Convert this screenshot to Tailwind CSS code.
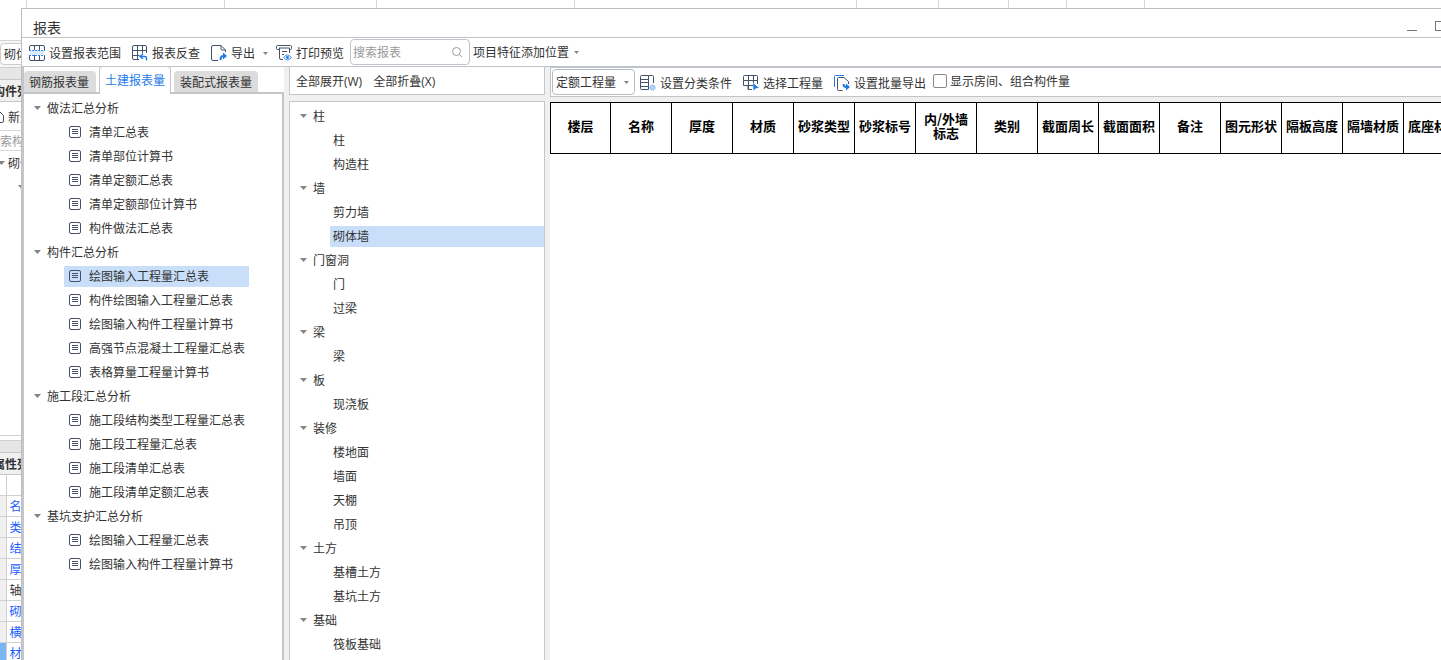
<!DOCTYPE html>
<html lang="zh-CN">
<head>
<meta charset="utf-8">
<title>报表</title>
<script src="https://cdn.jsdelivr.net/npm/@tailwindcss/browser@4"></script>
</head>
<body class="flex h-screen flex-col overflow-hidden bg-white font-['Noto_Sans_CJK_SC',sans-serif] text-xs text-[#333]">

<svg class="hidden">
  <symbol id="doc" viewBox="0 0 12 12"><rect x=".5" y=".5" width="11" height="11" rx="1.5" fill="none" stroke="#47506a"/><path d="M3 3.5h6M3 5.5h6M3 7.5h6" stroke="#47506a" fill="none"/></symbol>
  <symbol id="range" viewBox="0 0 16 16"><path d="M1 5h14v5H1z" fill="#dcebfb"/><path d="M.5 5V2A1.500 1.500 0 0 1 2 .5h12A1.500 1.500 0 0 1 15.500 2v3M.5 10v4A1.500 1.500 0 0 0 2 15.500h12a1.500 1.500 0 0 0 1.500-1.500v-4M5.500 1v4M10.500 1v4M5.500 10v5M10.500 10v5" fill="none" stroke="#47506a"/><path d="M0 5.500h16M0 10.500h16" stroke="#2d87f0" stroke-dasharray="2 1"/></symbol>
  <symbol id="lookup" viewBox="0 0 16 16"><path d="M7 14.500H2A1.500 1.500 0 0 1 .5 13V2A1.500 1.500 0 0 1 2 .5h11A1.500 1.500 0 0 1 14.500 2v6M.5 5.500h14M.5 10.500h7M5.500 .5v14M10.500 .5v8" fill="none" stroke="#47506a"/><path d="M11 9l-3 2.500 3 2.500M8.500 11.500H13a1.500 1.500 0 0 1 1.500 1.500v2.500" fill="none" stroke="#1e7be8" stroke-width="1.400"/></symbol>
  <symbol id="export" viewBox="0 0 16 16"><path d="M7 15.500H2A1.500 1.500 0 0 1 .5 14V2A1.500 1.500 0 0 1 2 .5h8l4.500 4.500v2M10 .5V4a1 1 0 0 0 1 1h3.500" fill="none" stroke="#47506a"/><path d="M9.500 15c0-3 1-4 3-4" fill="none" stroke="#1e7be8" stroke-width="2"/><path d="M12 7.500l4 3.500-4 3.500z" fill="#1e7be8"/></symbol>
  <symbol id="preview" viewBox="0 0 16 16"><path d="M3 4.500H1.500A1 1 0 0 1 .5 3.500v-2a1 1 0 0 1 1-1h13a1 1 0 0 1 1 1v2a1 1 0 0 1-1 1H13M3.500 3v10a1.500 1.500 0 0 0 1.500 1.500h2M3 3h10.500v5M6 6.500h5M6 9.500h2" fill="none" stroke="#47506a"/><path d="M7.500 12.500q4-5 8 0q-4 5-8 0z" fill="#dcebfb" stroke="#4a94f0"/><circle cx="11.500" cy="12.500" r="1.400" fill="#1e7be8"/></symbol>
  <symbol id="classify" viewBox="0 0 16 16"><path d="M8.500 14.500H1.500a1 1 0 0 1-1-1v-12a1 1 0 0 1 1-1h7v14M.5 4.500h8M.5 7.500h8M.5 11.500h8M8.500 .5h4a1 1 0 0 1 1 1V8" fill="none" stroke="#47506a"/><circle cx="12.500" cy="12.500" r="2.500" fill="#b5d5fa" stroke="#5d9fef" stroke-dasharray="1.500 .7"/></symbol>
  <symbol id="pick" viewBox="0 0 16 16"><path d="M9 14.500H5.500V.5h8a1 1 0 0 1 1 1V9M.5 5.500v-4a1 1 0 0 1 1-1H6M.5 5.500h14M5 14.500v-4H.5v-5M5.500 10.500H10M10.500 .5V8" fill="none" stroke="#47506a"/><path d="M10 8l6 5-3 .2-2.500 2.300z" fill="#1e7be8"/></symbol>
  <symbol id="batch" viewBox="0 0 16 16"><path d="M.5 12V1.500a1 1 0 0 1 1-1H10" fill="none" stroke="#1e7be8"/><path d="M8.500 15.500h-4a1 1 0 0 1-1-1v-11a1 1 0 0 1 1-1H10l4.500 4V9" fill="none" stroke="#47506a"/><path d="M9.500 9q0 3 3 3" fill="none" stroke="#1e7be8" stroke-width="2"/><path d="M12 8.500l4 3.500-4 3.500z" fill="#1e7be8"/></symbol>
  <symbol id="down" viewBox="0 0 7 4"><path d="M0 0h7L3.500 4z" fill="#858585"/></symbol>
</svg>

<!-- top edge of the main window's grid -->
<div class="flex h-2 shrink-0">
  <i class="w-[27px] border-r border-[#d4d4d4]"></i><i class="w-[198px] border-r border-[#d4d4d4]"></i><i class="w-[152px] border-r border-[#d4d4d4]"></i><i class="w-[198px] border-r border-[#d4d4d4]"></i><i class="w-[282px] border-r border-[#d4d4d4]"></i><i class="w-[82px] border-r border-[#d4d4d4]"></i><i class="w-[70px] border-r border-[#d4d4d4]"></i><i class="w-[58px] border-r border-[#d4d4d4]"></i><i class="w-[78px] border-r border-[#d4d4d4]"></i>
</div>

<div class="flex min-h-0 flex-1">
  <!-- visible sliver of the main window -->
  <aside class="flex w-[21px] shrink-0 flex-col overflow-hidden whitespace-nowrap">
    <div class="h-8 shrink-0"></div>
    <div class="h-[27px] shrink-0 border-t border-[#d4d4d4] bg-[#f5f5f5] pt-0.5"><div class="h-[22px] w-20 rounded border border-[#ccc] bg-white pl-[3px] leading-5">砌体墙</div></div>
    <div class="h-3 shrink-0 border-t border-[#d0d0d0] bg-[#e6e6e6]"></div>
    <div class="-ml-[3px] h-[23px] shrink-0 border-y border-[#c8c8c8] bg-[#f0f0f0] font-bold leading-[22px]"><span class="-ml-1">构件列表</span></div>
    <div class="flex h-7 shrink-0 items-center gap-1 pt-0.5"><svg class="-ml-2 h-3 w-3 shrink-0" viewBox="0 0 12 12"><path d="M2 .5h5.500l4 4V10a1.500 1.500 0 0 1-1.500 1.500H2" fill="none" stroke="#47506a"/></svg>新建</div>
    <div class="-ml-3 h-[21px] shrink-0 border-y border-[#d8d8d8] leading-[19px] text-[#999]">搜索构件</div>
    <div class="flex h-6 shrink-0 items-center gap-[3px]"><svg class="-ml-0.5 h-1 w-[7px] shrink-0"><use href="#down"/></svg>砌体墙</div>
    <div class="flex h-6 shrink-0 items-center pl-[18px]"><svg class="h-1 w-[7px] shrink-0"><use href="#down"/></svg></div>
    <div class="h-[236px] shrink-0"></div>
    <div class="h-[5px] shrink-0 border-t border-[#d0d0d0]"></div>
    <div class="h-3 shrink-0 border-t border-[#d0d0d0] bg-[#e6e6e6]"></div>
    <div class="-ml-[3px] h-[23px] shrink-0 border-y border-[#c8c8c8] bg-[#f0f0f0] font-bold leading-[22px]"><span class="-ml-1">属性列表</span></div>
    <table class="w-20 table-fixed border-collapse text-[#1a5cff]">
      <tbody>
      <tr class="h-5"><td class="w-1.5 border-r border-b border-[#d0d0d0]"></td><td class="border-b border-[#d0d0d0]"></td></tr>
      <tr class="h-[21px]"><td class="border-r border-b border-[#d0d0d0] bg-[#f0f0f0]"></td><td class="border-b border-[#d0d0d0] pl-[3px] leading-5">名称</td></tr>
      <tr class="h-[21px]"><td class="border-r border-b border-[#d0d0d0] bg-[#f0f0f0]"></td><td class="border-b border-[#d0d0d0] pl-[3px] leading-5">类别</td></tr>
      <tr class="h-[21px]"><td class="border-r border-b border-[#d0d0d0] bg-[#f0f0f0]"></td><td class="border-b border-[#d0d0d0] pl-[3px] leading-5">结构类型</td></tr>
      <tr class="h-[21px]"><td class="border-r border-b border-[#d0d0d0] bg-[#f0f0f0]"></td><td class="border-b border-[#d0d0d0] pl-[3px] leading-5">厚度</td></tr>
      <tr class="h-[21px]"><td class="border-r border-b border-[#d0d0d0] bg-[#f0f0f0]"></td><td class="border-b border-[#d0d0d0] pl-[3px] leading-5 text-[#333]">轴线</td></tr>
      <tr class="h-[21px]"><td class="border-r border-b border-[#d0d0d0] bg-[#f0f0f0]"></td><td class="border-b border-[#d0d0d0] pl-[3px] leading-5">砌体</td></tr>
      <tr class="h-[21px]"><td class="border-r border-b border-[#d0d0d0] bg-[#f0f0f0]"></td><td class="border-b border-[#d0d0d0] pl-[3px] leading-5">横向</td></tr>
      <tr class="h-[21px]"><td class="border-r border-b border-[#d0d0d0] bg-[#7ab5f5]"></td><td class="border-b border-[#d0d0d0] pl-[3px] leading-5">材质</td></tr>
      </tbody>
    </table>
  </aside>

  <!-- report dialog -->
  <main class="flex min-w-0 flex-1 flex-col border-t border-l border-[#bfbfbf] bg-white">
    <header class="flex h-7 shrink-0 items-end justify-between overflow-hidden pl-[11px]">
      <h1 class="text-sm leading-5">报表</h1>
      <div class="-mr-1 flex items-end gap-[18px] pb-1.5">
        <button aria-label="最小化" class="h-2.5 w-2.5 border-b border-[#777]"></button>
        <button aria-label="最大化" class="h-2.5 w-2.5 border border-[#777]"></button>
      </div>
    </header>

    <div class="flex h-[29px] shrink-0 items-center whitespace-nowrap border-t border-[#bfc3ca] pl-[7px]">
      <button class="flex items-center gap-1 pt-0.5"><svg class="h-4 w-4"><use href="#range"/></svg>设置报表范围</button>
      <button class="ml-[11px] flex items-center gap-1 pt-0.5"><svg class="h-4 w-4"><use href="#lookup"/></svg>报表反查</button>
      <button class="ml-[11px] flex items-center gap-1 pt-0.5"><svg class="h-4 w-4"><use href="#export"/></svg>导出<svg class="ml-1 h-[3px] w-[5px]" viewBox="0 0 7 4"><use href="#down" width="7" height="4"/></svg></button>
      <button class="ml-2 flex items-center gap-1 pt-0.5"><svg class="h-4 w-4"><use href="#preview"/></svg>打印预览</button>
      <label class="ml-1.5 flex h-[26px] w-[120px] items-center rounded border border-[#c0c4cc] pr-1.5 pl-0.5">
        <input type="text" aria-label="搜索报表" placeholder="搜索报表" class="w-full min-w-0 outline-none placeholder:text-[#999]">
        <svg class="h-3 w-3 shrink-0" viewBox="0 0 12 12" fill="none" stroke="#999"><circle cx="5.500" cy="5.500" r="4"/><path d="M8.500 8.500l2.500 2.500"/></svg>
      </label>
      <button class="ml-[3px] flex items-center gap-[5px]">项目特征添加位置<svg class="h-[3px] w-[5px]" viewBox="0 0 7 4"><use href="#down" width="7" height="4"/></svg></button>
    </div>

    <div class="flex min-h-0 flex-1 border-t border-[#bfc3ca] bg-[#f0f0f0]">
      <section class="flex w-[262px] shrink-0 flex-col border-l-2 border-[#c5c6cc]">
        <div role="tablist" class="flex h-[27px] shrink-0 items-end gap-[3px] whitespace-nowrap border-b-2 border-[#c5c6cc] bg-white">
          <button role="tab" class="h-[21px] w-[72px] rounded-t bg-[#dcdcdc] pr-0.5">钢筋报表量</button>
          <button role="tab" aria-selected="true" class="-mb-0.5 h-7 w-[72px] rounded-t border border-b-0 border-[#c5c6cc] bg-white pb-0.5 text-[#1e7be8]">土建报表量</button>
          <button role="tab" class="h-[21px] w-[84px] rounded-t bg-[#dcdcdc]">装配式报表量</button>
        </div>
        <ul id="reports" class="flex-1 overflow-hidden border-r-2 border-[#c5c6cc] bg-white pt-0.5"></ul>
      </section>

      <section class="ml-[5px] flex w-64 shrink-0 flex-col gap-1.5">
        <div class="flex h-7 shrink-0 items-center gap-[11px] border border-t-0 border-[#c5c6cc] bg-white px-1.5 pt-0.5 font-['Open_Sans','Noto_Sans_CJK_SC',sans-serif]"><button>全部展开(W)</button><button>全部折叠(X)</button></div>
        <ul id="parts" class="flex-1 overflow-hidden border border-b-0 border-[#c5c6cc] bg-white pt-0.5"></ul>
      </section>

      <section class="ml-[5px] flex min-w-0 flex-1 flex-col overflow-hidden">
        <div class="flex h-[30px] shrink-0 items-center whitespace-nowrap border-y border-l border-[#c0c4ca] bg-white pl-px">
          <div class="relative flex items-center">
            <select aria-label="工程量类型" class="h-[26px] w-[83px] appearance-none rounded border border-[#b8bcc4] bg-white pl-[3px]"><option>定额工程量</option></select>
            <svg class="pointer-events-none absolute right-1.5 h-[3px] w-[5px]" viewBox="0 0 7 4"><use href="#down" width="7" height="4"/></svg>
          </div>
          <button class="ml-[5px] flex items-center gap-1 pt-0.5"><svg class="h-4 w-4"><use href="#classify"/></svg>设置分类条件</button>
          <button class="ml-[11px] flex items-center gap-1 pt-0.5"><svg class="h-4 w-4"><use href="#pick"/></svg>选择工程量</button>
          <button class="ml-[11px] flex items-center gap-1 pt-0.5"><svg class="h-4 w-4"><use href="#batch"/></svg>设置批量导出</button>
          <label class="ml-[7px] flex items-center gap-[3px] pb-0.5"><input type="checkbox" class="h-3.5 w-3.5 appearance-none rounded-xs border border-[#888] bg-white">显示房间、组合构件量</label>
        </div>
        <div class="mt-[5px] flex-1 bg-white">
          <table class="w-[915px] table-fixed border-collapse text-[13px] leading-[14px] font-bold text-black">
            <thead><tr id="cols" class="h-[51px]"></tr></thead>
          </table>
        </div>
      </section>
    </div>
  </main>
</div>

<script>
const reports = [
  ['做法汇总分析', ['清单汇总表', '清单部位计算书', '清单定额汇总表', '清单定额部位计算书', '构件做法汇总表']],
  ['构件汇总分析', ['*绘图输入工程量汇总表', '构件绘图输入工程量汇总表', '绘图输入构件工程量计算书', '高强节点混凝土工程量汇总表', '表格算量工程量计算书']],
  ['施工段汇总分析', ['施工段结构类型工程量汇总表', '施工段工程量汇总表', '施工段清单汇总表', '施工段清单定额汇总表']],
  ['基坑支护汇总分析', ['绘图输入工程量汇总表', '绘图输入构件工程量计算书']]
];
const parts = [
  ['柱', ['柱', '构造柱']], ['墙', ['剪力墙', '*砌体墙']], ['门窗洞', ['门', '过梁']], ['梁', ['梁']], ['板', ['现浇板']],
  ['装修', ['楼地面', '墙面', '天棚', '吊顶']], ['土方', ['基槽土方', '基坑土方']], ['基础', ['筏板基础']]
];
const cols = ['楼层', '名称', '厚度', '材质', '砂浆类型', '砂浆标号', '内/外墙标志', '类别', '截面周长', '截面面积', '备注', '图元形状', '隔板高度', '隔墙材质', '底座材质'];
const group = t => `<button class="flex h-6 w-full items-center gap-1.5 pl-2.5"><svg class="h-1 w-[7px]"><use href="#down"/></svg>${t}</button>`;
document.getElementById('reports').innerHTML = reports.map(([g, items]) =>
  `<li>${group(g)}<ul>${items.map(t => {
    const on = t[0] === '*';
    return `<li class="flex h-6 items-center pl-10"><button class="flex h-[21px] w-[185px] items-center gap-2 pl-[5px] whitespace-nowrap ${on ? 'bg-[#c9dff9]' : ''}"><svg class="h-3 w-3 shrink-0"><use href="#doc"/></svg>${t.replace('*', '')}</button></li>`;
  }).join('')}</ul></li>`).join('');
document.getElementById('parts').innerHTML = parts.map(([g, items]) =>
  `<li>${group(g)}<ul>${items.map(t =>
    `<li class="flex h-6 items-center pl-10"><button class="h-[21px] w-full pl-[3px] text-left ${t[0] === '*' ? 'bg-[#c9dff9]' : ''}">${t.replace('*', '')}</button></li>`).join('')}</ul></li>`).join('');
document.getElementById('cols').innerHTML = cols.map((t, i) => `<th class="border border-black px-0.5 pb-1 ${i ? 'w-[61px]' : 'w-[60px]'}">${t}</th>`).join('');
</script>
</body>
</html>
